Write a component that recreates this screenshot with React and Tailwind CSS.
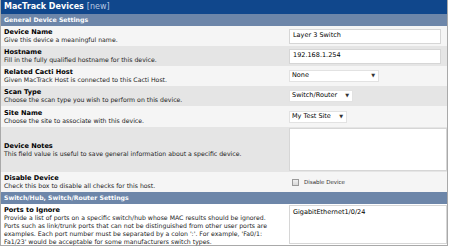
const font = { fontFamily: '"DejaVu Sans", Verdana, sans-serif' };

function Label({ title, children }) {
  return (
    <div className="pl-[3px] leading-[8px]">
      <div className="text-[6.6px] font-bold text-black">{title}</div>
      <div className="text-[6.2px] text-[#222]">{children}</div>
    </div>
  );
}

function TextBox({ value, w }) {
  return (
    <div
      className={`h-[15px] ${w} bg-white border border-[#d6d6d6] flex items-center pl-[3px] text-[6.5px] text-black`}
    >
      {value}
    </div>
  );
}

function Select({ value, w }) {
  return (
    <div
      className={`h-[12px] ${w} bg-white border border-[#e2e2e2] flex items-center justify-between pl-[2px] pr-[3px] text-[6.5px] text-black`}
    >
      <span>{value}</span>
      <span className="text-[5px] text-[#333]">▼</span>
    </div>
  );
}

function Row({ bg, h, children, right }) {
  return (
    <div className={`flex ${h} ${bg}`}>
      <div className="w-[288px] flex items-center">{children}</div>
      <div className="flex-1 flex items-center">{right}</div>
    </div>
  );
}

export default function App() {
  return (
    <div className="bg-white w-[450px] h-[247px]" style={font}>
      <div className="w-[448px] border-l border-r border-b border-[#a9a9a9] flex flex-col">
        {/* title bar */}
        <div className="h-[14px] bg-[#10478c] flex items-center pl-[3px] text-[8px]">
          <span className="font-bold text-white">MacTrack Devices</span>
          <span className="ml-[3px] text-[#b9c8e2]">[new]</span>
        </div>
        <div className="h-[12px] bg-[#6d86a9] flex items-center pl-[3px] text-[6.2px] font-bold text-white">
          General Device Settings
        </div>

        <Row bg="bg-[#f5f5f5]" h="h-[20px]" right={<TextBox value="Layer 3 Switch" w="w-[152px]" />}>
          <Label title="Device Name">Give this device a meaningful name.</Label>
        </Row>
        <Row bg="bg-[#e5e5e5]" h="h-[20px]" right={<TextBox value="192.168.1.254" w="w-[152px]" />}>
          <Label title="Hostname">Fill in the fully qualified hostname for this device.</Label>
        </Row>
        <Row bg="bg-[#f5f5f5]" h="h-[20px]" right={<Select value="None" w="w-[90px]" />}>
          <Label title="Related Cacti Host">Given MacTrack Host is connected to this Cacti Host.</Label>
        </Row>
        <Row bg="bg-[#e5e5e5]" h="h-[20px]" right={<Select value="Switch/Router" w="w-[64px]" />}>
          <Label title="Scan Type">Choose the scan type you wish to perform on this device.</Label>
        </Row>
        <Row bg="bg-[#f5f5f5]" h="h-[21px]" right={<Select value="My Test Site" w="w-[58px]" />}>
          <Label title="Site Name">Choose the site to associate with this device.</Label>
        </Row>
        <div className="flex h-[45px] bg-[#e5e5e5]">
          <div className="w-[288px] flex items-center">
            <Label title="Device Notes">
              This field value is useful to save general information about a specific device.
            </Label>
          </div>
          <div className="flex-1 pt-[1px] pb-[1px]">
            <div className="h-full bg-white border border-[#d6d6d6]" />
          </div>
        </div>
        <Row
          bg="bg-[#f5f5f5]"
          h="h-[20px]"
          right={
            <div className="flex items-center pl-[3px] gap-[5px]">
              <div className="w-[7px] h-[7px] border border-[#9a9a9a] bg-gradient-to-b from-[#f0f0f0] to-[#d8d8d8]" />
              <span className="text-[5.5px] text-[#333]">Disable Device</span>
            </div>
          }
        >
          <Label title="Disable Device">Check this box to disable all checks for this host.</Label>
        </Row>
        <div className="h-[12px] bg-[#6d86a9] flex items-center pl-[3px] text-[6.2px] font-bold text-white">
          Switch/Hub, Switch/Router Settings
        </div>
        <div className="flex h-[41px] bg-white">
          <div className="w-[288px] pt-[2px] whitespace-nowrap">
            <Label title="Ports to Ignore">
              Provide a list of ports on a specific switch/hub whose MAC results should be ignored.
              <br />
              Ports such as link/trunk ports that can not be distinguished from other user ports are
              <br />
              examples. Each port number must be separated by a colon ':'. For example, 'Fa0/1:
              <br />
              Fa1/23' would be acceptable for some manufacturers switch types.
            </Label>
          </div>
          <div className="flex-1 pt-[1px] pb-[1px]">
            <div className="h-full bg-white border border-[#d6d6d6] pl-[3px] pt-[2px] text-[6.5px] text-black leading-[8px]">
              GigabitEthernet1/0/24
            </div>
          </div>
        </div>
      </div>
    </div>
  );
}
